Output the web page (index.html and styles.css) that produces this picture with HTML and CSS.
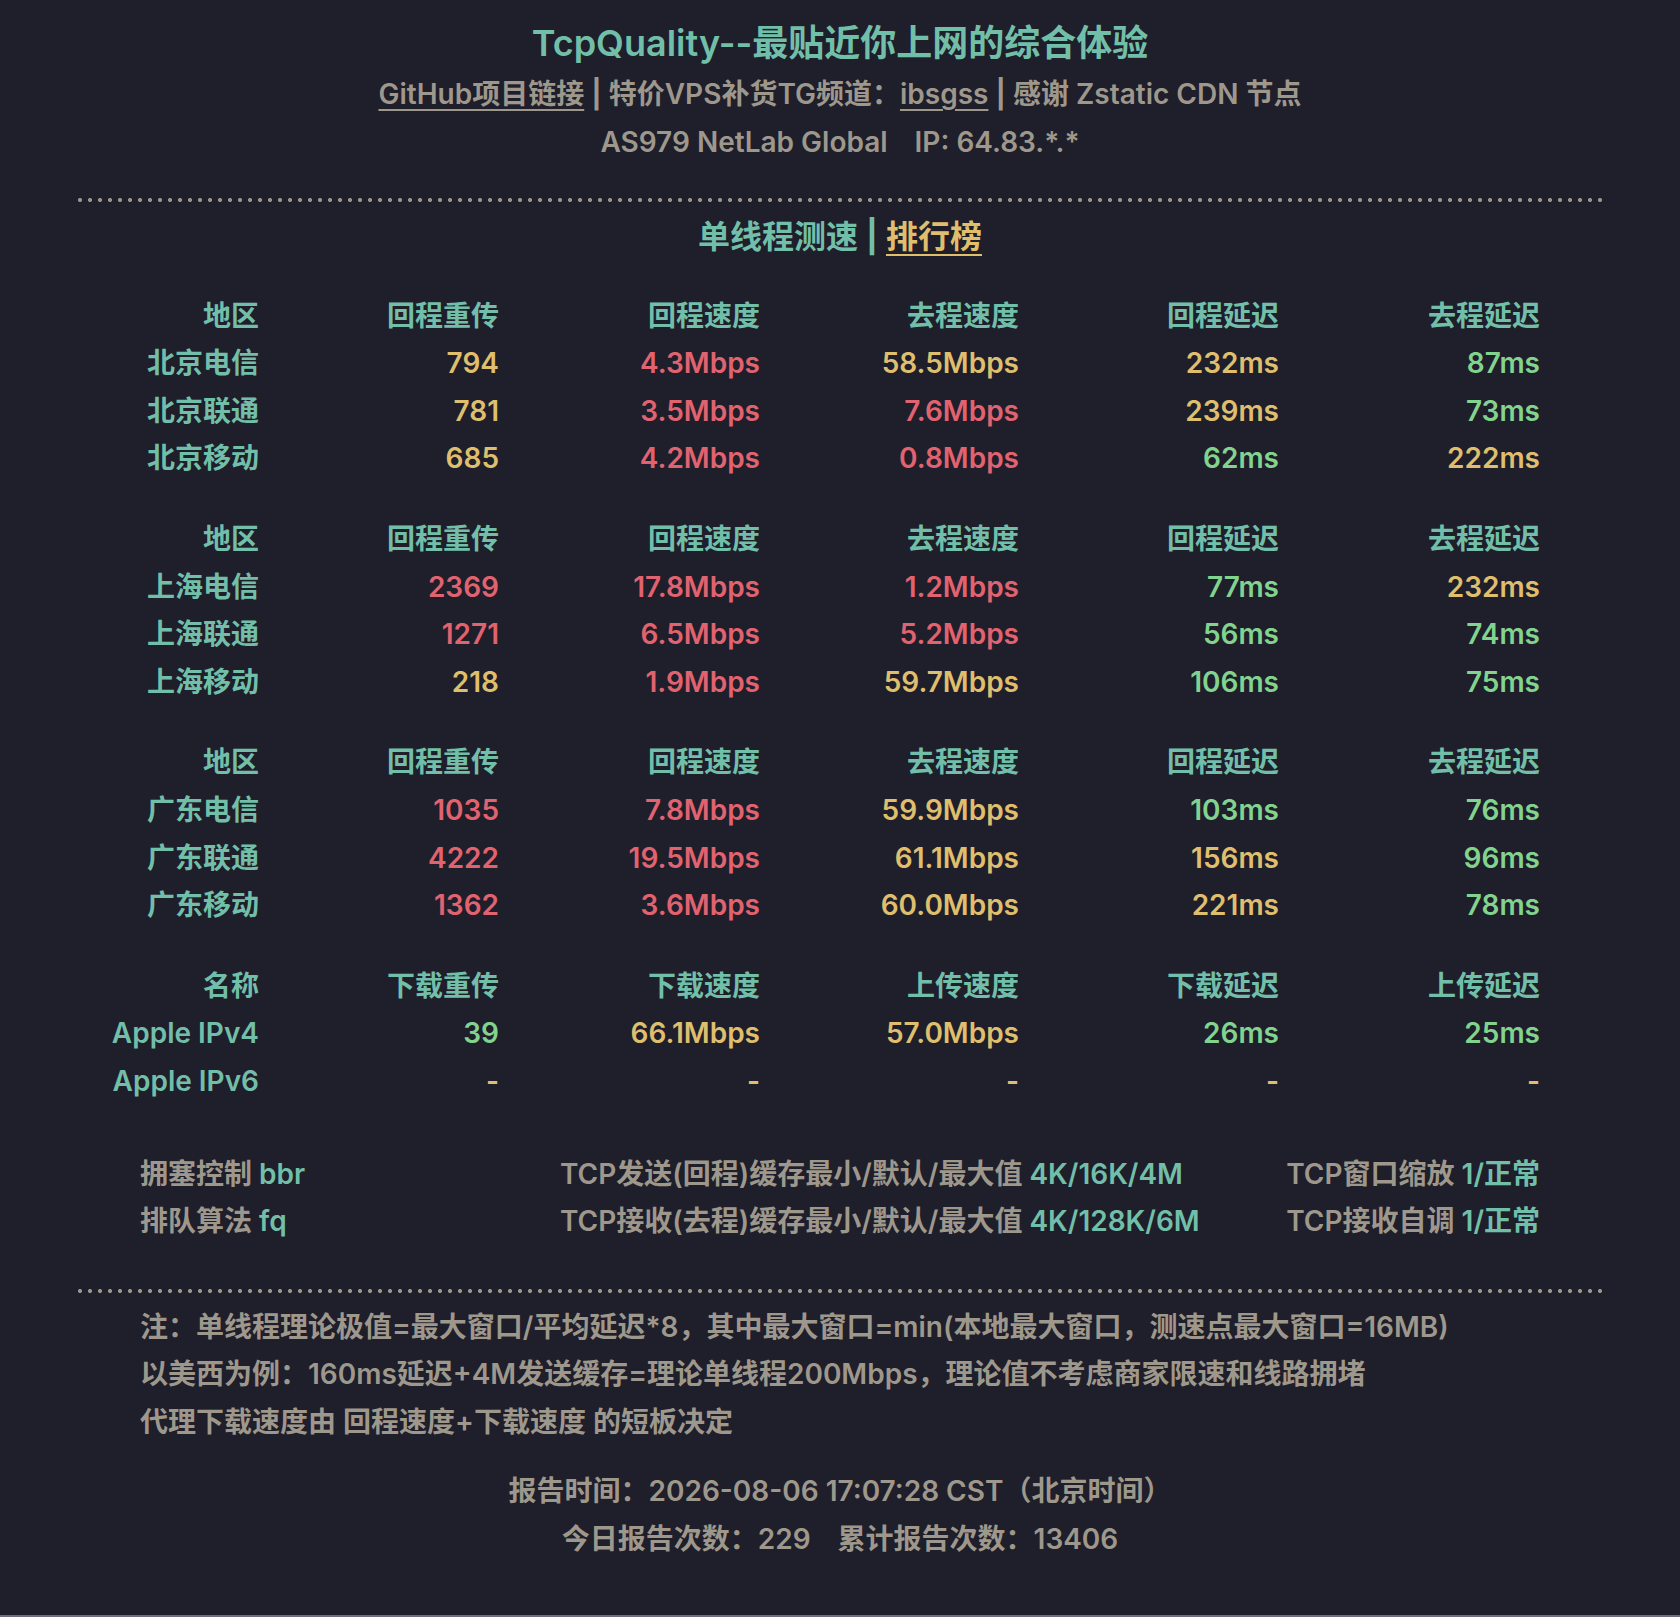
FILE: index.html
```html
<!DOCTYPE html>
<html lang="zh-CN">
<head>
<meta charset="utf-8">
<title>TcpQuality</title>
<link rel="stylesheet" href="styles.css">
</head>
<body>
<div class="page">
  <h1 class="title">TcpQuality--最贴近你上网的综合体验</h1>
  <div class="line links"><a class="lnk">GitHub项目链接</a> <span class="bar">|</span> 特价VPS补货TG频道：<a class="lnk">ibsgss</a> <span class="bar">|</span> 感谢 Zstatic CDN 节点</div>
  <div class="line">AS979 NetLab Global<span class="gap"></span>IP: 64.83.*.*</div>

  <div class="dots"></div>

  <div class="heading">单线程测速 <span class="hbar">|</span> <a class="rank">排行榜</a></div>

  <div class="grp">
    <div class="th">地区</div><div class="th">回程重传</div><div class="th">回程速度</div><div class="th">去程速度</div><div class="th">回程延迟</div><div class="th">去程延迟</div>
    <div class="th">北京电信</div><div class="y">794</div><div class="r">4.3Mbps</div><div class="y">58.5Mbps</div><div class="y">232ms</div><div class="g">87ms</div>
    <div class="th">北京联通</div><div class="y">781</div><div class="r">3.5Mbps</div><div class="r">7.6Mbps</div><div class="y">239ms</div><div class="g">73ms</div>
    <div class="th">北京移动</div><div class="y">685</div><div class="r">4.2Mbps</div><div class="r">0.8Mbps</div><div class="g">62ms</div><div class="y">222ms</div>
  </div>

  <div class="grp">
    <div class="th">地区</div><div class="th">回程重传</div><div class="th">回程速度</div><div class="th">去程速度</div><div class="th">回程延迟</div><div class="th">去程延迟</div>
    <div class="th">上海电信</div><div class="r">2369</div><div class="r">17.8Mbps</div><div class="r">1.2Mbps</div><div class="g">77ms</div><div class="y">232ms</div>
    <div class="th">上海联通</div><div class="r">1271</div><div class="r">6.5Mbps</div><div class="r">5.2Mbps</div><div class="g">56ms</div><div class="g">74ms</div>
    <div class="th">上海移动</div><div class="y">218</div><div class="r">1.9Mbps</div><div class="y">59.7Mbps</div><div class="g">106ms</div><div class="g">75ms</div>
  </div>

  <div class="grp">
    <div class="th">地区</div><div class="th">回程重传</div><div class="th">回程速度</div><div class="th">去程速度</div><div class="th">回程延迟</div><div class="th">去程延迟</div>
    <div class="th">广东电信</div><div class="r">1035</div><div class="r">7.8Mbps</div><div class="y">59.9Mbps</div><div class="g">103ms</div><div class="g">76ms</div>
    <div class="th">广东联通</div><div class="r">4222</div><div class="r">19.5Mbps</div><div class="y">61.1Mbps</div><div class="y">156ms</div><div class="g">96ms</div>
    <div class="th">广东移动</div><div class="r">1362</div><div class="r">3.6Mbps</div><div class="y">60.0Mbps</div><div class="y">221ms</div><div class="g">78ms</div>
  </div>

  <div class="grp">
    <div class="th">名称</div><div class="th">下载重传</div><div class="th">下载速度</div><div class="th">上传速度</div><div class="th">下载延迟</div><div class="th">上传延迟</div>
    <div class="th">Apple IPv4</div><div class="g">39</div><div class="y">66.1Mbps</div><div class="y">57.0Mbps</div><div class="g">26ms</div><div class="g">25ms</div>
    <div class="th">Apple IPv6</div><div class="y">-</div><div class="y">-</div><div class="y">-</div><div class="y">-</div><div class="y">-</div>
  </div>

  <div class="cfg">
    <div>拥塞控制 <span class="v">bbr</span></div>
    <div>TCP发送(回程)缓存最小/默认/最大值 <span class="v">4K/16K/4M</span></div>
    <div class="right">TCP窗口缩放 <span class="v">1/正常</span></div>
    <div>排队算法 <span class="v">fq</span></div>
    <div>TCP接收(去程)缓存最小/默认/最大值 <span class="v">4K/128K/6M</span></div>
    <div class="right">TCP接收自调 <span class="v">1/正常</span></div>
  </div>

  <div class="dots dots2"></div>

  <div class="notes">
    <div>注：单线程理论极值=最大窗口/平均延迟*8，其中最大窗口=min(本地最大窗口，测速点最大窗口=16MB)</div>
    <div>以美西为例：160ms延迟+4M发送缓存=理论单线程200Mbps，理论值不考虑商家限速和线路拥堵</div>
    <div>代理下载速度由 回程速度+下载速度 的短板决定</div>
  </div>

  <div class="footer">
    <div>报告时间：2026-08-06 17:07:28 CST（北京时间）</div>
    <div>今日报告次数：229<span class="gap"></span>累计报告次数：13406</div>
  </div>
</div>
</body>
</html>
```
FILE: styles.css
```css
html {
  background: #6e6d7c;
}
body {
  margin: 0;
  background: #1f1e2b;
  font-family: "Inter", "Noto Sans CJK SC", sans-serif;
  font-weight: 600;
  color: #9e988c;
  font-size: 28px;
  line-height: 47.6px;
}
.page {
  box-sizing: border-box;
  min-height: 1615px;
  padding: 15px 78px 0;
  background: #1f1e2b;
}
.title {
  margin: 0;
  font-size: 36px;
  line-height: 56px;
  font-weight: 600;
  color: #72bfa9;
  text-align: center;
}
.line {
  text-align: center;
}
.lnk {
  color: #9e988c;
  text-decoration: underline;
  text-decoration-thickness: 2px;
  text-underline-offset: 5px;
}
.bar {
  font-weight: 700;
}
.gap {
  display: inline-block;
  width: 27px;
}
.dots {
  height: 4px;
  margin-top: 32px;
  background-image: radial-gradient(circle at 2px 2px, #9a958a 1.8px, transparent 2.3px);
  background-size: 10px 4px;
  background-repeat: repeat-x;
}
.heading {
  margin-top: 8px;
  font-size: 32px;
  line-height: 54.4px;
  text-align: center;
  color: #72bfa9;
}
.hbar {
  font-weight: 700;
}
.rank {
  color: #dfbe6d;
  text-decoration: underline;
  text-decoration-thickness: 2px;
  text-underline-offset: 6px;
}
.grp {
  width: 1400px;
  margin: 28px auto 0;
  display: grid;
  grid-template-columns: 119px 240px 261px 259px 260px 261px;
  text-align: right;
}
.grp > div {
  justify-self: end;
  white-space: nowrap;
}
.grp + .grp {
  margin-top: 33px;
}
.th {
  color: #72bfa9;
}
.y { color: #dfbe6d; }
.r { color: #e0636f; }
.g { color: #82d38e; }
.cfg {
  width: 1400px;
  margin: 45px auto 0;
  display: grid;
  grid-template-columns: 420px 1fr auto;
}
.cfg .right {
  text-align: right;
}
.v {
  color: #72bfa9;
}
.dots2 {
  margin-top: 43px;
}
.notes {
  width: 1400px;
  margin: 11px auto 0;
}
.footer {
  margin-top: 22px;
  text-align: center;
}
```
